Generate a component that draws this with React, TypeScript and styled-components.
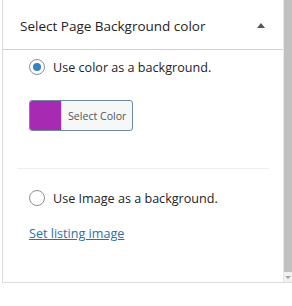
import React, { useState } from "react";
import styled, { createGlobalStyle } from "styled-components";

/* Global */
/* ************************************************************************** */
const GlobalStyle = createGlobalStyle`
  html, body {
    margin: 0;
    padding: 0;
    background: #ffffff;
  }
  body {
    font-family: "Open Sans", "Noto Sans", sans-serif;
    color: #23282d;
  }
`;

/* Styled Components */
/* ************************************************************************** */
const Page = styled.div`
  width: 292px;
  height: 306px;
  padding-left: 2px;
  box-sizing: border-box;
`;

const Panel = styled.div`
  display: flex;
  flex-direction: row;
  height: 283px;
  border-left: 1px solid #dcdcde;
  border-bottom: 1px solid #dcdcde;
  box-sizing: border-box;
`;

const Content = styled.div`
  flex: 1;
  display: flex;
  flex-direction: column;
  border-right: 1px solid #e8e8e8;
`;

const Header = styled.div`
  display: flex;
  align-items: center;
  justify-content: space-between;
  height: 50px;
  padding: 2px 18px 0 17px;
  border-bottom: 1px solid #cfd3d6;
  box-sizing: border-box;
`;

const Title = styled.h2`
  margin: 0;
  font-size: 13.5px;
  font-weight: 400;
  color: #1d2327;
`;

const Toggle = styled.span`
  width: 0;
  height: 0;
  border-left: 4px solid transparent;
  border-right: 4px solid transparent;
  border-bottom: 5px solid #50575e;
`;

const Body = styled.div`
  display: flex;
  flex-direction: column;
  padding: 0 14px;
`;

const Section = styled.div<{ $divided?: boolean }>`
  display: flex;
  flex-direction: column;
  align-items: flex-start;
  padding: ${(p) => (p.$divided ? "20px 12px 0" : "8px 12px 37px")};
  border-bottom: ${(p) => (p.$divided ? "none" : "1px solid #eeeeee")};
`;

const RadioLabel = styled.label`
  display: flex;
  align-items: center;
  gap: 8px;
  height: 18px;
  font-size: 12.6px;
  color: #1d2327;
  cursor: pointer;
`;

const RadioDot = styled.span<{ $checked?: boolean }>`
  position: relative;
  width: 16px;
  height: 16px;
  border-radius: 50%;
  border: 1px solid #8c8f94;
  box-sizing: border-box;
  background: #fff;

  &::after {
    content: "";
    display: ${(p) => (p.$checked ? "block" : "none")};
    position: absolute;
    left: 3px;
    top: 3px;
    width: 8px;
    height: 8px;
    border-radius: 50%;
    background: #3582c4;
  }
`;

const ColorButton = styled.button`
  display: flex;
  align-items: stretch;
  margin-top: 24px;
  padding: 0;
  height: 31px;
  border: 1px solid #6f8aa0;
  border-radius: 3px;
  background: #f6f7f7;
  overflow: hidden;
  cursor: pointer;
`;

const Swatch = styled.span<{ $color: string }>`
  width: 31px;
  background: ${(p) => p.$color};
  border-right: 1px solid #d6d6d6;
`;

const ButtonText = styled.span`
  display: flex;
  align-items: center;
  padding: 0 6px 0 6px;
  font-family: "Open Sans", "Noto Sans", sans-serif;
  font-size: 10.6px;
  color: #50575e;
`;

const Link = styled.a`
  margin-top: 18px;
  font-size: 12.6px;
  color: #2f6fa8;
  text-decoration: underline;
  cursor: pointer;
`;

const ScrollTrack = styled.div`
  display: flex;
  flex-direction: column;
  width: 8px;
  background: #f1f1f1;
`;

const ScrollThumb = styled.div`
  flex: 1;
  background: #c1c1c1;
`;

const ScrollArrow = styled.div`
  height: 10px;
  display: flex;
  align-items: center;
  justify-content: center;

  &::after {
    content: "";
    border-left: 3px solid transparent;
    border-right: 3px solid transparent;
    border-top: 3px solid #a3a3a3;
  }
`;

/* App */
/* ************************************************************************** */
export default function App() {
  const [mode, setMode] = useState<"color" | "image">("color");

  return (
    <Page>
      <GlobalStyle />
      <Panel>
        <Content>
          <Header>
            <Title>Select Page Background color</Title>
            <Toggle />
          </Header>
          <Body>
            <Section>
              <RadioLabel onClick={() => setMode("color")}>
                <RadioDot $checked={mode === "color"} />
                Use color as a background.
              </RadioLabel>
              <ColorButton>
                <Swatch $color="#a62ab2" />
                <ButtonText>Select Color</ButtonText>
              </ColorButton>
            </Section>
            <Section $divided>
              <RadioLabel onClick={() => setMode("image")}>
                <RadioDot $checked={mode === "image"} />
                Use Image as a background.
              </RadioLabel>
              <Link>Set listing image</Link>
            </Section>
          </Body>
        </Content>
        <ScrollTrack>
          <ScrollThumb />
          <ScrollArrow />
        </ScrollTrack>
      </Panel>
    </Page>
  );
}
